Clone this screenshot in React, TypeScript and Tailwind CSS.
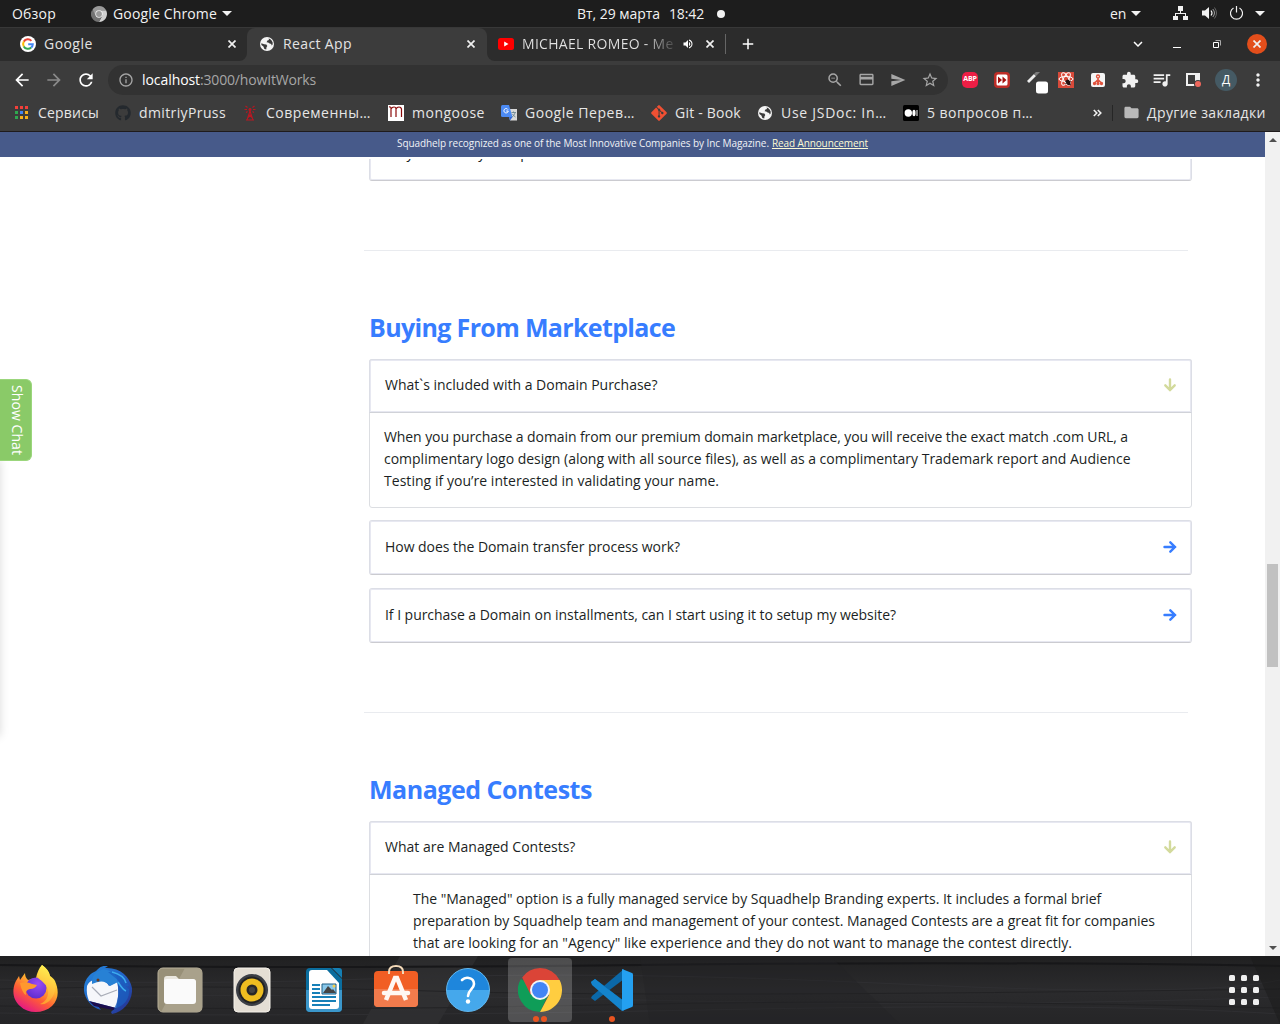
import type { ReactNode } from "react";
import { FaGithub, FaGitAlt } from "react-icons/fa";
import {
  MdAdd,
  MdArrowBack,
  MdArrowForward,
  MdCreditCard,
  MdExtension,
  MdFolder,
  MdInfoOutline,
  MdKeyboardArrowDown,
  MdMoreVert,
  MdQueueMusic,
  MdRefresh,
  MdSend,
  MdStarBorder,
  MdVolumeUp,
  MdZoomOut,
} from "react-icons/md";

const Caret = ({ className }: { className: string }) => (
  <svg viewBox="0 0 10 5" className={`h-[5px] w-[10px] shrink-0 ${className}`}>
    <path d="M0 0h10L5 5z" fill="#f2f2f2" />
  </svg>
);

const Cross = ({ className }: { className: string }) => (
  <svg viewBox="0 0 8 8" className={`h-2 w-2 shrink-0 ${className}`} fill="none" stroke="#f0f0f0" strokeWidth="1.700">
    <path d="m.5.5 7 7M7.500.5l-7 7" />
  </svg>
);

function GoogleIcon() {
  return (
    <svg viewBox="0 0 16 16" className="h-4 w-4 shrink-0">
      <circle cx="8" cy="8" r="8" fill="#fff" />
      <g fill="none" strokeWidth="2">
        <path d="M11.4 4.9A4.8 4.8 0 0 0 3.8 5.6" stroke="#ea4335" />
        <path d="M3.8 5.6a4.8 4.8 0 0 0 0 4.8" stroke="#fbbc05" />
        <path d="M3.8 10.4a4.8 4.8 0 0 0 7.4 1.2" stroke="#34a853" />
        <path d="M11.2 11.6A4.8 4.8 0 0 0 12.8 8.2H8.2" stroke="#4285f4" />
      </g>
    </svg>
  );
}

function Globe({ className }: { className: string }) {
  return (
    <svg viewBox="0 0 14 14" className={`h-[14px] w-[14px] shrink-0 ${className}`}>
      <circle cx="7" cy="7" r="7" fill="#f4f4f4" />
      <path
        d="M1.3 6.2 4.2 7.3 6.4 7.6 7.3 9 6.4 10.4 6.3 12.6 4.4 12 3.4 9.4 1.4 8zM8.6 1.4 9 3 7.4 3.6 6.6 5.2 8.2 5.6 9.6 6.4 11.4 7 11.3 8.6 12.7 7.6 12.6 5.2 11.4 3.2 10 2z"
        fill="#3a3a3a"
      />
    </svg>
  );
}

function ChromeIcon({ className, gray }: { className: string; gray?: boolean }) {
  const [red, green, yellow, blue] = gray
    ? ["#9a9a9a", "#727272", "#d0d0d0", "#999999"]
    : ["#db4437", "#0f9d58", "#ffcd40", "#4285f4"];
  return (
    <svg viewBox="0 0 44 44" className={className}>
      <path d="M22 22 2.9 11A22 22 0 0 0 22 44l8-17z" fill={green} />
      <path d="M22 12h19.6A22 22 0 0 1 22 44L31 27z" fill={yellow} />
      <path d="M22 0a22 22 0 0 1 19.6 12H22L12.6 26.4 4.2 9.4A22 22 0 0 1 22 0z" fill={red} />
      <circle cx="22" cy="22" r="10" fill="#f4f4f4" />
      <circle cx="22" cy="22" r="8" fill={blue} />
    </svg>
  );
}

function TopBar() {
  return (
    <div className="flex h-[27px] shrink-0 items-center whitespace-nowrap bg-[#1d1d1d] text-[14px] text-[#f2f2f2]">
      <span className="ml-3 w-11 tracking-[0.2px]">Обзор</span>
      <ChromeIcon gray className="ml-[35px] h-4 w-4 shrink-0" />
      <span className="ml-[6px] w-[104px] tracking-[0.15px]">Google Chrome</span>
      <Caret className="ml-[5px]" />
      <span className="ml-[345px] w-[83px] tracking-[-0.04px]">Вт, 29 марта</span>
      <span className="ml-[9px] w-[35px] tracking-[-0.14px]">18:42</span>
      <span className="ml-[13px] h-2 w-2 rounded-full bg-[#f2f2f2]" />
      <span className="ml-[385px] w-4 tracking-[-0.2px]">en</span>
      <Caret className="ml-[5px]" />
      <svg viewBox="0 0 15 14" className="-mt-px ml-8 h-[14px] w-[15px] shrink-0" fill="#f2f2f2">
        <path d="M5 0h5v5H8v2h5v3h2v4h-5v-4h2V8H3v2h2v4H0v-4h2V7h5V5H5z" />
      </svg>
      <svg viewBox="0 0 15 14" className="-mt-px ml-[14px] h-[14px] w-[15px] shrink-0" fill="none">
        <path d="M0 4.5h3L7 1v12L3 9.500H0z" fill="#f2f2f2" />
        <path d="M9 4.500q2 2.500 0 5" stroke="#f2f2f2" strokeWidth="1.200" />
        <path d="M10.800 3q3.400 4 0 8" stroke="#a0a0a0" />
        <path d="M12.500 1.500q4 5.500 0 11" stroke="#666" />
      </svg>
      <svg viewBox="0 0 13 14" className="-mt-px ml-[13px] h-[14px] w-[13px] shrink-0" fill="none" stroke="#f2f2f2" strokeWidth="1.200">
        <path d="M3.500 2A6 6 0 1 0 9.500 2M6.500 0v6.500" />
      </svg>
      <Caret className="ml-3" />
    </div>
  );
}

function TabStrip() {
  return (
    <div className="flex h-[34px] shrink-0 border-t border-[#383838] bg-[#3c3c3c] text-[14px] leading-5 text-[#e3e3e3]">
      <div className="flex h-[33px] w-[247px] shrink-0 items-center rounded-br-lg bg-[#2c2c2c] pb-px pl-5 pr-[11px]">
        <GoogleIcon />
        <span className="ml-2 flex-1 tracking-[0.45px]">Google</span>
        <Cross className="" />
      </div>
      <div className="flex h-[33px] w-60 shrink-0 bg-[#2c2c2c]">
        <div className="flex w-60 items-center rounded-t-lg bg-[#3c3c3c] pb-px pl-[13px] pr-3">
          <Globe className="" />
          <span className="ml-[9px] flex-1 tracking-[0.37px]">React App</span>
          <Cross className="" />
        </div>
      </div>
      <div className="flex h-[33px] flex-1 items-center rounded-bl-lg bg-[#2c2c2c] pb-px pl-[11px]">
        <svg viewBox="0 0 16 12" className="h-3 w-4 shrink-0">
          <rect width="16" height="12" rx="2.500" fill="#f00" />
          <path d="M6.200 3.500v5L10.500 6z" fill="#fff" />
        </svg>
        <span className="ml-2 w-[153px] overflow-hidden whitespace-nowrap bg-linear-to-r from-[#e3e3e3] from-80% to-[#444444] bg-clip-text tracking-[0.3px] text-transparent">
          MICHAEL ROMEO - Me
        </span>
        <MdVolumeUp className="ml-[7px] h-3 w-3 shrink-0 text-white" />
        <Cross className="ml-3" />
        <span className="ml-[11px] h-5 w-px bg-[#666]" />
        <MdAdd className="ml-[13px] h-[18px] w-[18px] shrink-0 text-white" />
        <MdKeyboardArrowDown className="ml-auto h-[18px] w-[18px] shrink-0 text-white" />
        <span className="ml-[26px] mt-[6px] h-px w-2 bg-white" />
        <svg viewBox="0 0 8 8" className="ml-8 h-2 w-2 shrink-0" fill="none" stroke="#fff">
          <path d="M.5 2.500h5v5h-5z" />
          <path d="M2.500.5h5v5" stroke="#aaa" />
        </svg>
        <span className="ml-[26px] mr-[13px] flex h-5 w-5 items-center justify-center rounded-full bg-[#e34e1b]">
          <Cross className="" />
        </span>
      </div>
    </div>
  );
}

function Extensions() {
  return (
    <>
      <span className="ml-[14px] flex h-4 w-4 items-center justify-center rounded-[5px] bg-[#ed1e45] text-[7px] font-bold tracking-[-0.2px] text-white">ABP</span>
      <svg viewBox="0 0 16 16" className="ml-4 h-4 w-4 shrink-0">
        <rect width="16" height="16" rx="4" fill="#bd2d27" />
        <rect x="2.500" y="2.500" width="11" height="11" rx="1.500" fill="#fff" />
        <path d="M4 4.500 8 8 4 11.500zM8.500 4.500l4 3.500-4 3.500z" fill="#a3110e" />
      </svg>
      <svg viewBox="0 0 22 22" className="ml-4 mt-[6px] h-[22px] w-[22px] shrink-0">
        <path d="m2 10 7-7" stroke="#eee" strokeWidth="2.800" />
        <path d="m9 3 4-4" stroke="#7c7c7c" strokeWidth="3" />
        <rect x="10" y="9.500" width="12" height="12" rx="2.500" fill="#fff" />
      </svg>
      <svg viewBox="0 0 16 16" className="ml-[10px] h-4 w-4 shrink-0">
        <path d="M0 0h16v16H0z" fill="#d84a3a" />
        <g fill="none" stroke="#fff">
          <ellipse cx="8" cy="7" rx="7" ry="2.600" />
          <ellipse cx="8" cy="7" rx="7" ry="2.600" transform="rotate(60 8 7)" />
          <ellipse cx="8" cy="7" rx="7" ry="2.600" transform="rotate(-60 8 7)" />
        </g>
        <ellipse cx="10" cy="10.500" rx="2" ry="3" fill="#211" transform="rotate(-25 10 10)" />
        <path d="m7 9 6 4M7 12l6-3" stroke="#211" strokeWidth=".8" />
      </svg>
      <svg viewBox="0 0 14 14" className="ml-[17px] h-[14px] w-[14px] shrink-0">
        <rect width="14" height="14" rx="2" fill="#f5f5f5" />
        <g stroke="#e0533d" fill="#e0533d" strokeWidth="1.300">
          <circle cx="7" cy="3.500" r="1.500" fill="none" />
          <path d="M7 5v5M7 6.500 3.500 10M7 6.500l3.500 3.500" fill="none" />
          <circle cx="3.500" cy="10.500" r="1" />
          <circle cx="7" cy="10.500" r="1" />
          <circle cx="10.500" cy="10.500" r="1" />
        </g>
      </svg>
      <MdExtension className="ml-4 h-[18px] w-[18px] shrink-0 text-[#f1f1f1]" />
      <MdQueueMusic className="ml-[12px] h-[21px] w-[21px] shrink-0 text-[#f1f1f1]" />
      <svg viewBox="0 0 16 16" className="ml-[13px] h-4 w-4 shrink-0">
        <path d="M2 2h12v11H2z" fill="none" stroke="#f1f1f1" strokeWidth="2" />
        <path d="M10 1h5v12h-5z" fill="#f1f1f1" />
        <circle cx="13" cy="12" r="4" fill="#3c3c3c" />
        <circle cx="13" cy="12" r="3" fill="#ee675c" />
      </svg>
      <span className="ml-[14px] flex h-[22px] w-[22px] shrink-0 items-center justify-center rounded-full bg-[#455a64] text-[12px] text-white">Д</span>
      <MdMoreVert className="ml-[11px] h-5 w-5 shrink-0 text-[#f1f1f1]" />
    </>
  );
}

function Toolbar() {
  return (
    <div className="flex h-[37px] shrink-0 items-center bg-[#3c3c3c] text-[14px]">
      <MdArrowBack className="ml-3 h-[20px] w-[20px] shrink-0 text-white" />
      <MdArrowForward className="ml-3 h-[20px] w-[20px] shrink-0 text-[#8a8a8a]" />
      <MdRefresh className="ml-3 h-[20px] w-[20px] shrink-0 text-white" />
      <div className="ml-3 flex h-[30px] w-[840px] shrink-0 items-center rounded-full bg-[#323232] text-[#a6a6a6]">
        <MdInfoOutline className="ml-[10px] h-4 w-4 shrink-0" />
        <span className="ml-2 flex-1">
          <span className="tracking-[-0.07px] text-white">localhost</span>
          <span className="tracking-[-0.17px]">:3000/howItWorks</span>
        </span>
        <MdZoomOut className="h-[18px] w-[18px]" />
        <MdCreditCard className="ml-[14px] h-[17px] w-[17px]" />
        <MdSend className="ml-[15px] h-4 w-4" />
        <MdStarBorder className="ml-[15px] mr-[9px] h-[18px] w-[18px]" />
      </div>
      <Extensions />
    </div>
  );
}

function BookmarksBar() {
  return (
    <div className="flex h-[34px] shrink-0 items-start border-b border-[#1f1b1c] bg-[#3c3c3c] text-[14px] text-[#e6e6e6]">
      <div className="flex h-[29px] w-full items-center whitespace-nowrap">
        <svg viewBox="0 0 14 14" className="ml-[15px] h-[14px] w-[14px] shrink-0">
          <path d="M0 0h3v3H0zM5 0h3v3H5zM10 0h3v3h-3z" fill="#f2403a" />
          <path d="M0 5h3v3H0z" fill="#2fa84f" />
          <path d="M5 5h3v3H5z" fill="#4285f4" />
          <path d="M10 5h3v3h-3zM5 10h3v3H5zM10 10h3v3h-3z" fill="#f6b01c" />
          <path d="M0 10h3v3H0z" fill="#2fa84f" />
        </svg>
        <span className="ml-[9px] w-[61px] tracking-[0.19px]">Сервисы</span>
        <FaGithub className="ml-4 h-4 w-4 shrink-0 text-[#24292e]" />
        <span className="ml-2 w-[87px] tracking-[0.38px]">dmitriyPruss</span>
        <svg viewBox="0 0 14 16" className="ml-[17px] h-4 w-[14px] shrink-0" fill="none" stroke="#b81822" strokeWidth="1.100">
          <path d="M7 6 4 15M7 6l3 9M5.800 9.500 9.500 13M8.200 9.500 4.500 13M3 15h8M4.500 2.500 2.500 1M4 4.500H1.500M9.500 2.500l2-1.500M10 4.500h2.500M4.500 6.500 3 7.500M9.500 6.500 11 7.500" />
          <circle cx="7" cy="4.500" r="1" fill="#b81822" />
        </svg>
        <span className="ml-[9px] w-[105px] tracking-[0.52px]">Современны…</span>
        <svg viewBox="0 0 16 16" className="ml-[17px] h-4 w-4 shrink-0">
          <path d="M0 0h16v16H0z" fill="#fff" />
          <path d="M1 2q2-.5 2 1.500V12M3 4q1-2 3-2t2 2v8M8 4q1-2 3-2t2.500 2v8" fill="none" stroke="#8b0b0b" strokeWidth="1.200" />
        </svg>
        <span className="ml-2 w-[73px] tracking-[0.5px]">mongoose</span>
        <svg viewBox="0 0 16 16" className="ml-4 h-4 w-4 shrink-0">
          <path d="M6 4h10v11.500H9z" fill="#d8d8d8" />
          <path d="M0 1.500Q0 0 1.500 0H8l3.500 12H1.500Q0 12 0 10.500z" fill="#4c8bf5" />
          <path d="M7 4.600A2.200 2.200 0 1 0 7.300 6H5.200" fill="none" stroke="#fff" />
          <path d="M10.500 7.500h4.500M12.500 6.500v1M14 8q-1 3-3 4M11.500 9q1 2 3 3" fill="none" stroke="#607d8b" strokeWidth=".8" />
          <path d="m8 12 3.500 0L9 15.500z" fill="#3367d6" />
        </svg>
        <span className="ml-2 w-[110px] tracking-[0.53px]">Google Перев…</span>
        <FaGitAlt className="ml-[15px] h-[18px] w-[18px] shrink-0 text-[#f05033]" />
        <span className="ml-[7px] w-[66px] tracking-[0.22px]">Git - Book</span>
        <Globe className="ml-[17px]" />
        <span className="ml-[9px] w-[106px] tracking-[0.72px]">Use JSDoc: In…</span>
        <svg viewBox="0 0 16 16" className="ml-4 h-4 w-4 shrink-0">
          <rect width="16" height="16" rx="1.500" fill="#000" />
          <circle cx="5.300" cy="8" r="3.700" fill="#fff" />
          <ellipse cx="11" cy="8" rx="1.600" ry="3.200" fill="#fff" />
          <path d="M13.500 5h1v6h-1z" fill="#fff" />
        </svg>
        <span className="ml-2 w-[106px] tracking-[0.45px]">5 вопросов п…</span>
        <svg viewBox="0 0 9 8" className="ml-[60px] h-2 w-[9px] shrink-0" fill="none" stroke="#f1f1f1" strokeWidth="1.600">
          <path d="m.8 1 3 3-3 3M4.800 1l3 3-3 3" />
        </svg>
        <span className="ml-[10px] h-4 w-px bg-[#262626]" />
        <MdFolder className="ml-[10px] h-[17px] w-[17px] shrink-0 text-[#b9b9b9]" />
        <span className="ml-[7px] tracking-[0.37px]">Другие закладки</span>
      </div>
    </div>
  );
}

function Arrow({ open }: { open?: boolean }) {
  return (
    <svg
      viewBox="0 0 14 14"
      className={open ? "h-[14px] w-[14px] rotate-90 text-[#d3da9c]" : "h-[14px] w-[14px] text-[#377dff]"}
      fill="none"
      stroke="currentColor"
      strokeWidth="2.400"
      strokeLinecap="round"
    >
      <path d="M1.500 7h10.500M7.300 2.300 12 7l-4.700 4.700" />
    </svg>
  );
}

function Question({ children }: { children: ReactNode }) {
  return (
    <div className="flex h-[55px] shrink-0 items-center justify-between rounded-[3px] border border-[#dcdee6] border-b-[#cbcbd0] pb-px pl-[15px] pr-[14px] shadow-[inset_0_0_0_1px_#e7e8f1]">
      <span>{children}</span>
      <Arrow />
    </div>
  );
}

function OpenQuestion({ title, children }: { title: string; children: ReactNode }) {
  return (
    <div className="rounded-[3px] border border-[#dcdee2]">
      <div className="-mx-px -mt-px flex h-[54px] items-center justify-between rounded-t-[3px] border border-[#dcdee6] border-b-[#d0d2d8] pb-[3px] pl-[15px] pr-[14px] shadow-[inset_0_0_0_1px_#e7e8f1]">
        <span>{title}</span>
        <Arrow open />
      </div>
      {children}
    </div>
  );
}

const Heading = ({ children }: { children: ReactNode }) => (
  <h2 className="mt-[60px] h-8 text-[25px] font-bold leading-8 text-[#377dff]">{children}</h2>
);

const Divider = () => <div className="-ml-[5px] mt-[69px] h-px w-[824px] bg-[#e9ebef]" />;

function Page() {
  return (
    <div className="relative h-[824px] flex-1 overflow-hidden bg-white">
      <div className="h-[25px] bg-[#475a8a] pl-[397px] text-[10px] leading-[23px] text-[#f0f2f6]">
        <span className="tracking-[-0.08px]">Squadhelp recognized as one of the Most Innovative Companies by Inc Magazine.</span>
        <span className="ml-[3px] tracking-[-0.11px] text-[#fdfbd4] underline">Read Announcement</span>
      </div>
      <main className="ml-[369px] mt-[2px] w-[823px] whitespace-nowrap text-[14px] leading-[22px] text-[#1b1f24]">
        <div className="flex h-[22px] flex-col justify-end overflow-hidden">
          <Question>Why should my idea pass?</Question>
        </div>
        <Divider />
        <Heading>
          <span className="tracking-[-0.65px]">Buying From Marketplace</span>
        </Heading>
        <div className="mt-[16px]">
          <OpenQuestion title="What`s included with a Domain Purchase?">
            <p className="px-[14px] pb-[15px] pt-[13px]">
              <span className="tracking-[-0.086px]">When you purchase a domain from our premium domain marketplace, you will receive the exact match .com URL, a</span>
              <br />
              <span className="tracking-[-0.012px]">complimentary logo design (along with all source files), as well as a complimentary Trademark report and Audience</span>
              <br />
              <span className="tracking-[0.04px]">Testing if you’re interested in validating your name.</span>
            </p>
          </OpenQuestion>
        </div>
        <div className="mt-3 flex flex-col gap-[13px]">
          <Question>
            <span className="tracking-[-0.045px]">How does the Domain transfer process work?</span>
          </Question>
          <Question>
            <span className="tracking-[-0.039px]">If I purchase a Domain on installments, can I start using it to setup my website?</span>
          </Question>
        </div>
        <Divider />
        <Heading>
          <span className="tracking-[-0.48px]">Managed Contests</span>
        </Heading>
        <div className="mt-4">
          <OpenQuestion title="What are Managed Contests?">
            <p className="px-[43px] pb-[15px] pt-[13px]">
              <span className="tracking-[-0.02px]">The "Managed" option is a fully managed service by Squadhelp Branding experts. It includes a formal brief</span>
              <br />
              <span className="tracking-[-0.031px]">preparation by Squadhelp team and management of your contest. Managed Contests are a great fit for companies</span>
              <br />
              <span className="tracking-[0.03px]">that are looking for an "Agency" like experience and they do not want to manage the contest directly.</span>
            </p>
          </OpenQuestion>
        </div>
      </main>
      <div className="absolute -left-10 top-[328px] h-[276px] w-10 shadow-[0_0_9px_rgba(0,0,0,0.15)]" />
      <div className="absolute left-0 top-[247px] flex h-[82px] w-8 items-center justify-center rounded-r-md border border-l-0 border-[#9bd67c] bg-[#8aca68] pl-[3px] text-[14px] tracking-[0.07px] text-white [writing-mode:vertical-rl]">
        Show Chat
      </div>
    </div>
  );
}

function Scrollbar() {
  return (
    <div className="flex w-[15px] shrink-0 flex-col items-center bg-[#f1f1f1]">
      <svg viewBox="0 0 8 4" className="mt-[6px] h-1 w-2">
        <path d="M0 4h8L4 0z" fill="#505050" />
      </svg>
      <div className="mt-[422px] h-[103px] w-[11px] bg-[#c1c1c1]" />
      <svg viewBox="0 0 8 4" className="mb-[6px] mt-auto h-1 w-2">
        <path d="M0 0h8L4 4z" fill="#505050" />
      </svg>
    </div>
  );
}

function FirefoxIcon() {
  return (
    <svg viewBox="0 0 46 48" className="h-12 w-[46px]">
      <defs>
        <linearGradient id="fxBody" x1=".8" y1=".1" x2=".3" y2="1">
          <stop offset="0" stopColor="#fff44f" />
          <stop offset=".35" stopColor="#ffb52e" />
          <stop offset=".65" stopColor="#ff5d36" />
          <stop offset="1" stopColor="#e31587" />
        </linearGradient>
        <radialGradient id="fxGlobe" cx=".6" cy=".3" r=".8">
          <stop offset="0" stopColor="#9a4cf5" />
          <stop offset="1" stopColor="#592acb" />
        </radialGradient>
        <linearGradient id="fxFlame" x1=".5" y1="0" x2=".3" y2="1">
          <stop offset="0" stopColor="#fff251" />
          <stop offset="1" stopColor="#ff9a2e" />
        </linearGradient>
      </defs>
      <path
        d="M29 1c4 3 7 6 8 11 2 1 4 3 5 5 4 9 4 18-3 25-9 8-24 8-32 0C0 36-1 27 2 19c1-3 3-5 4-7l1 4 5-7c0 3 1 5 3 7l8-2c1-5 3-10 6-13z"
        fill="url(#fxBody)"
      />
      <circle cx="23" cy="24" r="10.500" fill="url(#fxGlobe)" />
      <path d="M29 1c4 3 7 6 8 11 6 7 7 16 1 23-3 4-7 6-11 5 6-2 9-8 8-14-1-5-5-8-10-12 0-5 2-10 4-13z" fill="url(#fxFlame)" />
      <path d="M7 19q7-2 12 1l5 1q-2 4-7 4-5 1-4 6-4-2-6-12z" fill="#ff982e" />
    </svg>
  );
}

function ThunderbirdIcon() {
  return (
    <svg viewBox="0 0 48 48" className="h-12 w-12">
      <defs>
        <linearGradient id="tbBody" x1="0" y1="0" x2="1" y2="1">
          <stop offset="0" stopColor="#2488dc" />
          <stop offset=".5" stopColor="#2263c8" />
          <stop offset="1" stopColor="#272a87" />
        </linearGradient>
      </defs>
      <path d="M14 3q4-4 10-3l-3 2c14-1 25 8 27 20 1 12-8 24-20 26l-1-2 3-3-16-3 3 4C5 41-1 29 0 21 1 12 7 7 12 5z" fill="url(#tbBody)" />
      <path d="M3 20Q5 15 10 14q12-1 15 6l8-4q3 10-1 26L5 35Q2 28 3 20z" fill="#f6f7fb" />
      <path d="m8 21 9 9 16-6" fill="none" stroke="#a9adb8" strokeWidth="1.200" />
      <path d="M5 35 32 42l-3 2-19-4z" fill="#1c0d4d" />
      <path d="M8 18Q7 6 20 3q13 3 14 13l-8 4Q20 12 8 18z" fill="#2781d5" />
      <path d="M24 6q15 0 21 14-6 1-11-3 2 15-4 26 16-5 15-20" fill="#1b5fc0" opacity=".75" />
      <path d="M28 6q12 3 14 11M34 16q5 8 8 9" fill="none" stroke="#3cacee" strokeWidth="1.500" />
      <circle cx="14" cy="14" r="1.500" fill="#6b3b20" />
    </svg>
  );
}

function WriterIcon() {
  return (
    <svg viewBox="0 0 38 46" className="h-[46px] w-[38px]">
      <path d="M5 1h21l11 11v29q0 4-4 4H5q-4 0-4-4V5q0-4 4-4z" fill="#0a6d9e" />
      <path d="M1 23h36v18q0 4-4 4H5q-4 0-4-4z" fill="#3b97cb" />
      <path d="M7 3h15l12 13v23q0 3-3 3H7q-3 0-3-3V6q0-3 3-3z" fill="#fff" />
      <path d="M27 1h7q3 0 3 3v7z" fill="#147fb4" />
      <path d="M7 18h8M7 22h8M7 26h8M7 30h24M7 34h24M7 38h18" stroke="#1780b8" strokeWidth="2" />
      <path d="M17 17h14v10H17z" fill="#8ac8ea" stroke="#1c5d84" />
      <path d="m18 26 5-7 4 4 1-1 3 4z" fill="#444" />
      <circle cx="29" cy="19" r="1.500" fill="#f8d04a" />
    </svg>
  );
}

function SoftwareIcon() {
  return (
    <svg viewBox="0 0 46 44" className="mb-1 h-11 w-[46px]">
      <path d="M1 11q0-4 4-4h36q4 0 4 4v28q0 4-4 4H5q-4 0-4-4z" fill="#f15e24" />
      <path d="M1 25h44v14q0 4-4 4H5q-4 0-4-4z" fill="#f27b4c" />
      <path d="M16 10V8q0-6 7-6t7 6v2" fill="none" stroke="#f3d9b8" strokeWidth="2" />
      <path d="m13 36 9-22h2l9 22" fill="none" stroke="#fff7f2" strokeWidth="4.500" />
      <path d="M11 29h24" stroke="#fff7f2" strokeWidth="4.500" strokeLinecap="round" />
    </svg>
  );
}

function VsCodeIcon() {
  return (
    <svg viewBox="0 0 44 44" className="h-11 w-11">
      <path d="M1 14 5 11 34 33v10L2 16z" fill="#0878bf" />
      <path d="M1 30 5 33 34 11V1L2 28z" fill="#0b68a8" />
      <path d="m1 14 4-3 27 21v11L2 17z" fill="#1484cd" />
      <path d="m32 1 10 4q1 0 1 2v30q0 2-1 2l-10 4z" fill="#24a0f0" />
    </svg>
  );
}

function Dock() {
  return (
    <div className="relative flex h-[68px] shrink-0 items-start overflow-hidden bg-linear-to-b from-[#202021] via-[#2b2b2d] to-[#252527]">
      <svg viewBox="0 0 1280 68" className="absolute inset-0 h-[68px] w-[1280px]" fill="none">
        <path d="M400 0h78l-40 68h-75z" fill="#343437" opacity=".55" />
        <path d="M0 9q300 4 640 0t640 1" stroke="#171719" strokeWidth="2" />
        <path d="M0 24q200 6 400-2t500 6 380-4M0 42q300-6 640 2t640-3M0 57q300 5 700-3t580 4" stroke="#2f2f32" />
        <path d="M0 33q200-5 430 2t850-2M0 50q300 6 600-1t680 3" stroke="#222224" />
        <path d="M640 0h190l70 68H650z" fill="#222225" opacity=".4" />
        <path d="M1250 0h30v68z" fill="#19191a" opacity=".5" />
      </svg>
      <div className="relative flex h-[68px] w-full items-center">
        <div className="flex w-[72px] justify-center pb-1"><FirefoxIcon /></div>
        <div className="flex w-[72px] justify-center"><ThunderbirdIcon /></div>
        <div className="flex w-[72px] justify-center">
          <svg viewBox="0 0 46 46" className="h-[46px] w-[46px]">
            <rect x="1" y="1" width="44" height="44" rx="5" fill="#989078" stroke="#b8b09a" />
            <path d="M28 1h13q4 0 4 4v36q0 4-4 4H4z" fill="#a9a18b" />
            <path d="M7 14v-2q0-3 3-3h9l3 3h13q4 0 4 4z" fill="#e9e6de" />
            <rect x="7" y="12" width="32" height="25" rx="3" fill="#fafafa" />
          </svg>
        </div>
        <div className="flex w-[72px] justify-center">
          <svg viewBox="0 0 38 46" className="h-[46px] w-[38px]">
            <rect x="1" y="1" width="36" height="44" rx="4" fill="#e4ded4" stroke="#f5f1ea" />
            <circle cx="19" cy="23" r="16" fill="#3c3f46" />
            <circle cx="19" cy="23" r="13.500" fill="#222" />
            <circle cx="19" cy="23" r="11.500" fill="#eebd20" />
            <circle cx="19" cy="23" r="5.500" fill="#272727" />
            <circle cx="19" cy="23" r="3" fill="#444" />
          </svg>
        </div>
        <div className="flex w-[72px] justify-center"><WriterIcon /></div>
        <div className="flex w-[72px] justify-center pb-1"><SoftwareIcon /></div>
        <div className="flex w-[72px] justify-center">
          <div className="flex h-11 w-11 items-center justify-center rounded-full border border-[#60b8f1] bg-linear-to-b from-[#1e86dc] from-50% to-[#45a8ec] to-50%">
            <svg viewBox="0 0 18 30" className="h-[30px] w-[18px]" fill="none">
              <path d="M3 5q3-3 7-2 5 1 5 6c0 5-6 6-6 12" stroke="#fff" strokeWidth="2.600" strokeLinecap="round" />
              <circle cx="9" cy="26.500" r="2.200" fill="#fff" />
            </svg>
          </div>
        </div>
        <div className="relative mx-1 flex h-16 w-16 items-center justify-center rounded bg-white/20">
          <ChromeIcon className="h-11 w-11" />
          <span className="absolute bottom-0 left-[25px] h-[6px] w-[6px] rounded-full bg-[#e95420]" />
          <span className="absolute bottom-0 left-[33px] h-[6px] w-[6px] rounded-full bg-[#e95420]" />
        </div>
        <div className="relative flex h-16 w-[72px] items-center justify-center">
          <VsCodeIcon />
          <span className="absolute bottom-0 left-[33px] h-[6px] w-[6px] rounded-full bg-[#e95420]" />
        </div>
        <div className="ml-auto mr-[21px] grid grid-cols-3 gap-[6px]">
          {Array.from({ length: 9 }, (_, i) => (
            <span key={i} className="h-[6px] w-[6px] rounded-[1.5px] bg-[#efefef]" />
          ))}
        </div>
      </div>
    </div>
  );
}

export default function App() {
  return (
    <div className="flex h-[1024px] w-[1280px] flex-col overflow-hidden font-['Open_Sans',sans-serif]">
      <TopBar />
      <TabStrip />
      <Toolbar />
      <BookmarksBar />
      <div className="flex min-h-0 flex-1">
        <Page />
        <Scrollbar />
      </div>
      <Dock />
    </div>
  );
}
